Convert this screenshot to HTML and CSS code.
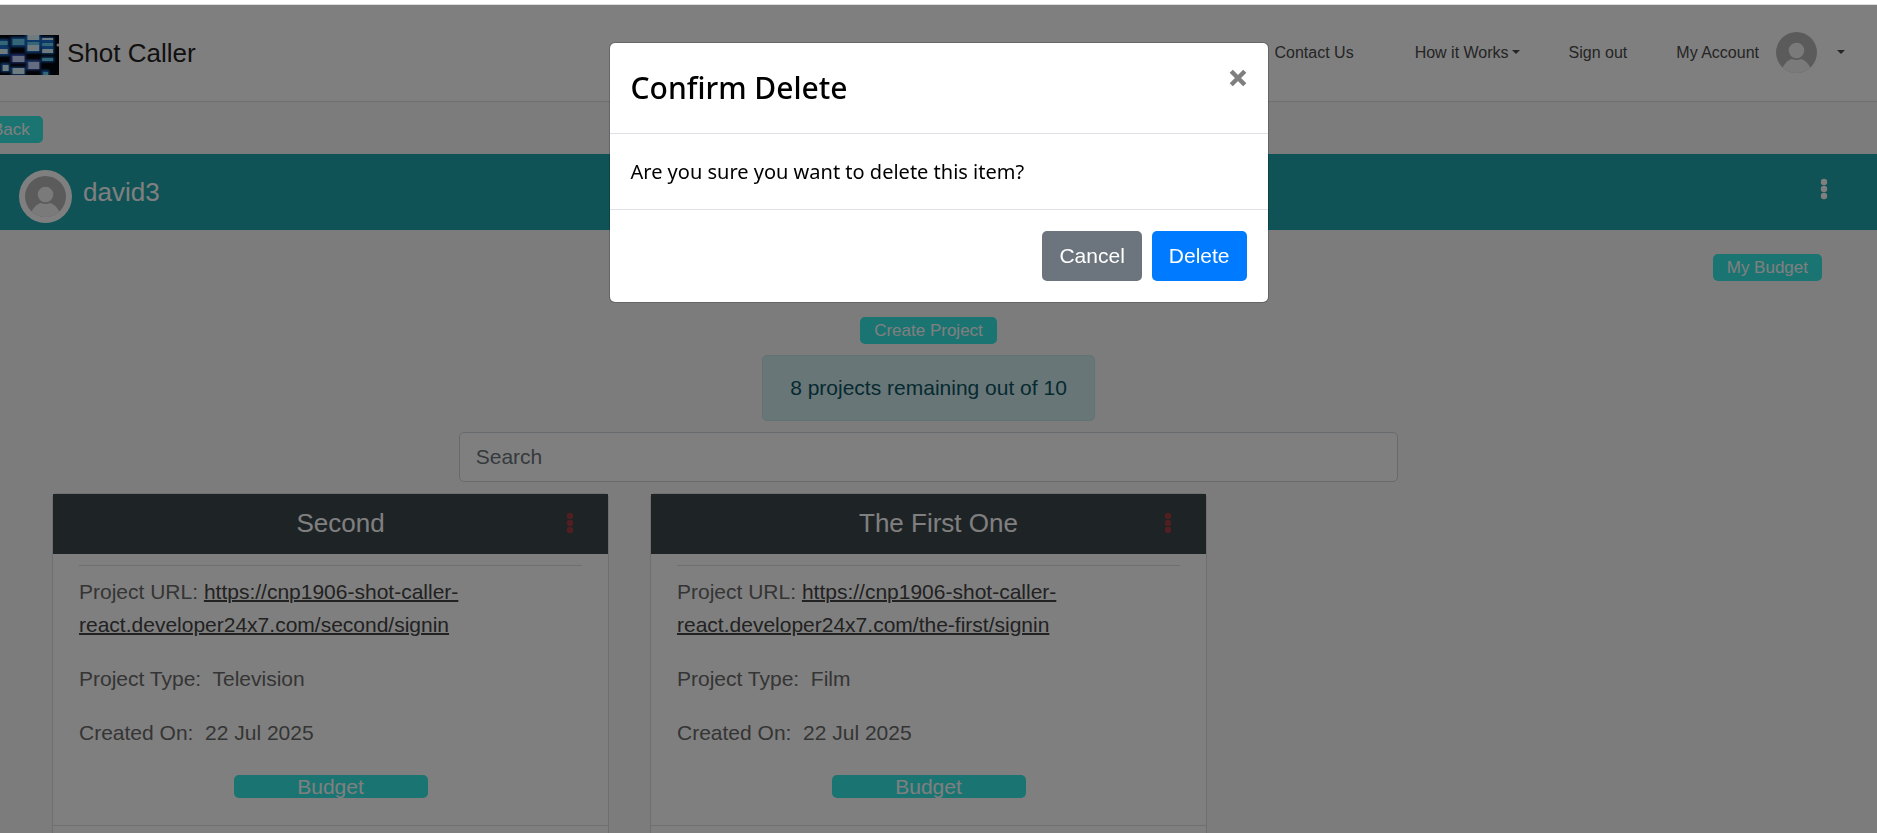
FILE: index.html
```html
<!DOCTYPE html>
<html lang="en">
<head>
<meta charset="utf-8">
<title>Shot Caller</title>
<link rel="stylesheet" href="styles.css">
</head>
<body>
<svg width="0" height="0" class="defs" aria-hidden="true">
  <symbol id="person" viewBox="0 0 40 40">
    <clipPath id="disc"><circle cx="20" cy="20" r="20"/></clipPath>
    <g clip-path="url(#disc)">
      <rect width="40" height="40" fill="#b7b7b7"/>
      <circle cx="20" cy="18" r="7.600" fill="#f5f5f5"/>
      <path d="M6 36C8 31 12 27 15.500 26.300Q20 28.500 24.500 26.300C28 27 32 31 34 36L34 40H6Z" fill="#f5f5f5"/>
    </g>
  </symbol>
  <symbol id="dots" viewBox="0 0 8 22">
    <circle cx="4" cy="4" r="3.200"/><circle cx="4" cy="11" r="3.200"/><circle cx="4" cy="18" r="3.200"/>
  </symbol>
</svg>
<div class="page">
  <header class="topbar">
    <a class="brand" href="#">
      <svg class="logo" viewBox="0 0 80 40" preserveAspectRatio="none" aria-hidden="true">
        <defs>
          <filter id="glow"><feGaussianBlur stdDeviation="1"/></filter>
          <filter id="soft"><feGaussianBlur stdDeviation=".7"/></filter>
        </defs>
        <rect width="80" height="40" fill="#05060f"/>
        <g filter="url(#glow)" fill="#1f6fd0">
          <rect x="18" y="4" width="11" height="8"/><rect x="18" y="12" width="12" height="9"/><rect x="21" y="28" width="9" height="9"/>
          <rect x="31" y="2" width="15" height="10"/><rect x="31" y="19" width="15" height="9" fill="#3d5fd0"/><rect x="31" y="32" width="15" height="8"/>
          <rect x="46" y="-2" width="15" height="20"/><rect x="47" y="25" width="14" height="10" fill="#3d6fd8"/>
          <rect x="61" y="2" width="14" height="10"/><rect x="62" y="12" width="13" height="7"/><rect x="62" y="22" width="13" height="5"/><rect x="62" y="35" width="8" height="6"/>
        </g>
        <g filter="url(#soft)">
          <g fill="#66cdec"><rect x="19" y="6" width="9" height="4"/><rect x="33" y="4" width="12" height="6"/><rect x="48" y="7" width="12" height="3"/><rect x="63" y="8" width="11" height="3"/><rect x="63" y="23" width="11" height="3"/><rect x="64" y="37" width="5" height="3"/></g>
          <g fill="#dcf6ff"><rect x="19" y="14" width="9" height="5"/><rect x="23" y="30" width="6" height="6"/><rect x="33" y="33" width="12" height="6"/><rect x="48" y="0" width="12" height="5"/><rect x="48" y="10" width="12" height="6"/><rect x="63" y="3" width="11" height="2"/><rect x="63" y="14" width="11" height="4"/></g>
          <g fill="#ccd8ff"><rect x="33" y="21" width="12" height="6"/><rect x="49" y="27" width="11" height="7"/></g>
          <circle cx="79" cy="10" r="1.500" fill="#ddd"/>
        </g>
      </svg>
      <span>Shot Caller</span>
    </a>
    <nav class="nav">
      <a class="contact" href="#">Contact Us</a>
      <a href="#">How it Works<i class="caret"></i></a>
      <a href="#">Sign out</a>
      <a class="account" href="#"><span>My Account</span><svg class="avatar" aria-hidden="true"><use href="#person"/></svg><i class="caret"></i></a>
    </nav>
  </header>
  <div class="back-row"><button class="pill back">Back</button></div>
  <section class="profile">
    <span class="profile-photo"><svg class="avatar" aria-hidden="true"><use href="#person"/></svg></span>
    <h1 class="title">david3</h1>
    <button class="dots-button" aria-label="Profile menu"><svg class="dots"><use href="#dots"/></svg></button>
  </section>
  <main class="content">
    <div class="budget-row"><button class="pill">My Budget</button></div>
    <div class="tools">
      <button class="pill">Create Project</button>
      <div class="alert">8 projects remaining out of 10</div>
      <input class="search" type="search" placeholder="Search" aria-label="Search">
    </div>
    <div class="cards">
      <article class="card">
        <header class="card-head"><h2 class="title">Second</h2><button class="dots-button red" aria-label="Project menu"><svg class="dots"><use href="#dots"/></svg></button></header>
        <div class="card-body">
          <p>Project URL: <a href="#">https://cnp1906-shot-caller-<wbr>react.developer24x7.com/second/signin</a></p>
          <p>Project Type:&nbsp; Television</p>
          <p>Created On:&nbsp; 22 Jul 2025</p>
          <button class="budget">Budget</button>
        </div>
        <footer class="card-foot"></footer>
      </article>
      <article class="card">
        <header class="card-head"><h2 class="title">The First One</h2><button class="dots-button red" aria-label="Project menu"><svg class="dots"><use href="#dots"/></svg></button></header>
        <div class="card-body">
          <p>Project URL: <a href="#">https://cnp1906-shot-caller-<wbr>react.developer24x7.com/the-first/signin</a></p>
          <p>Project Type:&nbsp; Film</p>
          <p>Created On:&nbsp; 22 Jul 2025</p>
          <button class="budget">Budget</button>
        </div>
        <footer class="card-foot"></footer>
      </article>
    </div>
  </main>
</div>
<div class="backdrop">
  <div class="modal" role="dialog" aria-modal="true" aria-labelledby="confirm-title">
    <header class="modal-head">
      <h2 id="confirm-title">Confirm Delete</h2>
      <button class="close" aria-label="Close"><svg viewBox="0 0 16 16" aria-hidden="true"><path d="M2 2L14 14M14 2L2 14"/></svg></button>
    </header>
    <div class="modal-body">Are you sure you want to delete this item?</div>
    <footer class="modal-foot"><button class="btn secondary">Cancel</button><button class="btn primary">Delete</button></footer>
  </div>
</div>
</body>
</html>
```

FILE: styles.css
```css
* { box-sizing: border-box; }
html { background: #fff; overflow: hidden; }
body {
  margin: 0;
  font-family: "Liberation Sans", Arial, sans-serif;
  font-size: 21px;
  line-height: 33px;
  color: #6a6a6a;
}
button, input { font: inherit; }
button { border: 0; cursor: pointer; }
p, h1, h2 { margin: 0; }
.defs { position: absolute; }

.page {
  margin: 4px 0 0 -20px;
  height: calc(100vh - 4px);
  overflow: hidden;
  background: #f9f9f9;
  border-top: 1px solid #dedede;
}

.topbar {
  display: flex;
  align-items: center;
  justify-content: space-between;
  height: 97px;
  padding: 0 32px 14px 0;
  background: #fff;
  border-bottom: 1px solid #dedede;
}
.brand {
  display: flex;
  align-items: center;
  gap: 8px;
  padding-top: 14px;
  color: #222;
  font-size: 26px;
  text-decoration: none;
}
.logo { width: 79px; height: 40px; margin-top: 4px; }
.nav {
  display: flex;
  align-items: center;
  gap: 49px;
  padding-top: 12px;
  font-size: 16px;
}
.nav a { color: #4a4a4a; text-decoration: none; }
.nav .contact { margin-right: 12px; }
.caret {
  display: inline-block;
  margin-left: 3px;
  vertical-align: 4px;
  border: 4px solid transparent;
  border-top-color: #4a4a4a;
  border-bottom: 0;
}
.account { display: flex; align-items: center; gap: 17px; }
.avatar { width: 41px; height: 41px; }

.back-row { padding: 14px 0 11px; line-height: 27px; display: flex; }
.pill {
  padding: 0 14px;
  border-radius: 5px;
  background: #34e8e4;
  color: #fff;
  font-size: 17px;
  line-height: 27px;
}
.back { padding: 0 13px 0 12px; }

.profile {
  display: flex;
  align-items: center;
  gap: 11px;
  height: 76px;
  padding: 0 49px 0 39px;
  background: #20a6ae;
}
.profile-photo {
  display: grid;
  place-items: center;
  width: 53px;
  height: 53px;
  margin-top: 9px;
  border-radius: 50%;
  background: #fff;
}
.title {
  color: #fff;
  font-size: 26px;
  font-weight: 400;
  line-height: 32px;
}
.dots-button { padding: 0; background: none; color: #fff; display: grid; }
.profile .dots-button { margin-left: auto; margin-bottom: 6px; }
.dots { width: 8px; height: 22px; fill: currentColor; }
.dots-button.red { color: #a33c44; }

.content { padding: 24px 55px 0 72px; }
.budget-row { display: flex; justify-content: flex-end; }
.tools {
  display: flex;
  flex-direction: column;
  align-items: center;
  gap: 11px;
  margin-top: 36px;
  padding-right: 17px;
}
.alert {
  padding: 16px 27px;
  border: 1px solid #bee5eb;
  border-radius: 5px;
  background: #d1ecf1;
  color: #0c5460;
  line-height: 32px;
}
.search {
  width: 53.600%;
  height: 50px;
  padding: 0 16px;
  border: 1px solid #ced4da;
  border-radius: 5px;
  background: #fff;
  appearance: none;
}
.search::placeholder { color: #6c757d; opacity: 1; }

.cards {
  display: grid;
  grid-template-columns: repeat(3, 1fr);
  gap: 41px;
  margin-top: 11px;
  padding-right: 17px;
}
.card {
  background: #fff;
  border: 1px solid #dedede;
  border-radius: 5px;
}
.card-head {
  display: grid;
  grid-template-columns: 1fr auto 1fr;
  align-items: center;
  height: 60px;
  padding: 0 34px 2px 54px;
  background: #3c464c;
}
.card-head .title { grid-column: 2; }
.card-head .dots-button { justify-self: end; }
.card-body { margin: 11px 26px 0; padding: 9px 0 27px; border-top: 1px solid #dedede; }
.card-body p { margin-bottom: 21px; }
.card-body a { color: #444; text-decoration-thickness: 2px; }
.budget {
  display: block;
  width: 194px;
  margin: 26px auto 0;
  padding: 0;
  border-radius: 5px;
  background: #34e8e4;
  color: #fff;
  line-height: 23px;
}
.card-foot { height: 64px; border-top: 1px solid #dedede; }

.backdrop {
  position: fixed;
  inset: 5px 0 0;
  padding-top: 37px;
  background: rgba(0, 0, 0, 0.5);
}
.modal {
  width: 660px;
  margin: 0 auto;
  border: 1px solid rgba(0, 0, 0, 0.2);
  border-radius: 6px;
  background: #fff;
  background-clip: padding-box;
  color: #000;
  font-family: "Noto Sans", sans-serif;
}
.modal-head {
  display: flex;
  justify-content: space-between;
  align-items: flex-start;
  padding: 21px;
  border-bottom: 1px solid #dee2e6;
}
.modal-head h2 { font-size: 30px; font-weight: 500; line-height: 48px; }
.close { padding: 5px 0 0; background: none; display: grid; }
.close svg { width: 18px; height: 18px; stroke: #7f7f7f; stroke-width: 4; }
.modal-body { padding: 21px; font-size: 20px; }
.modal-foot {
  display: flex;
  justify-content: flex-end;
  gap: 10px;
  padding: 21px;
  border-top: 1px solid #dee2e6;
  font-family: "Liberation Sans", Arial, sans-serif;
}
.btn { padding: 0 17px; border-radius: 5px; color: #fff; line-height: 50px; }
.secondary { background: #6c757d; }
.primary { background: #007bff; }
```
